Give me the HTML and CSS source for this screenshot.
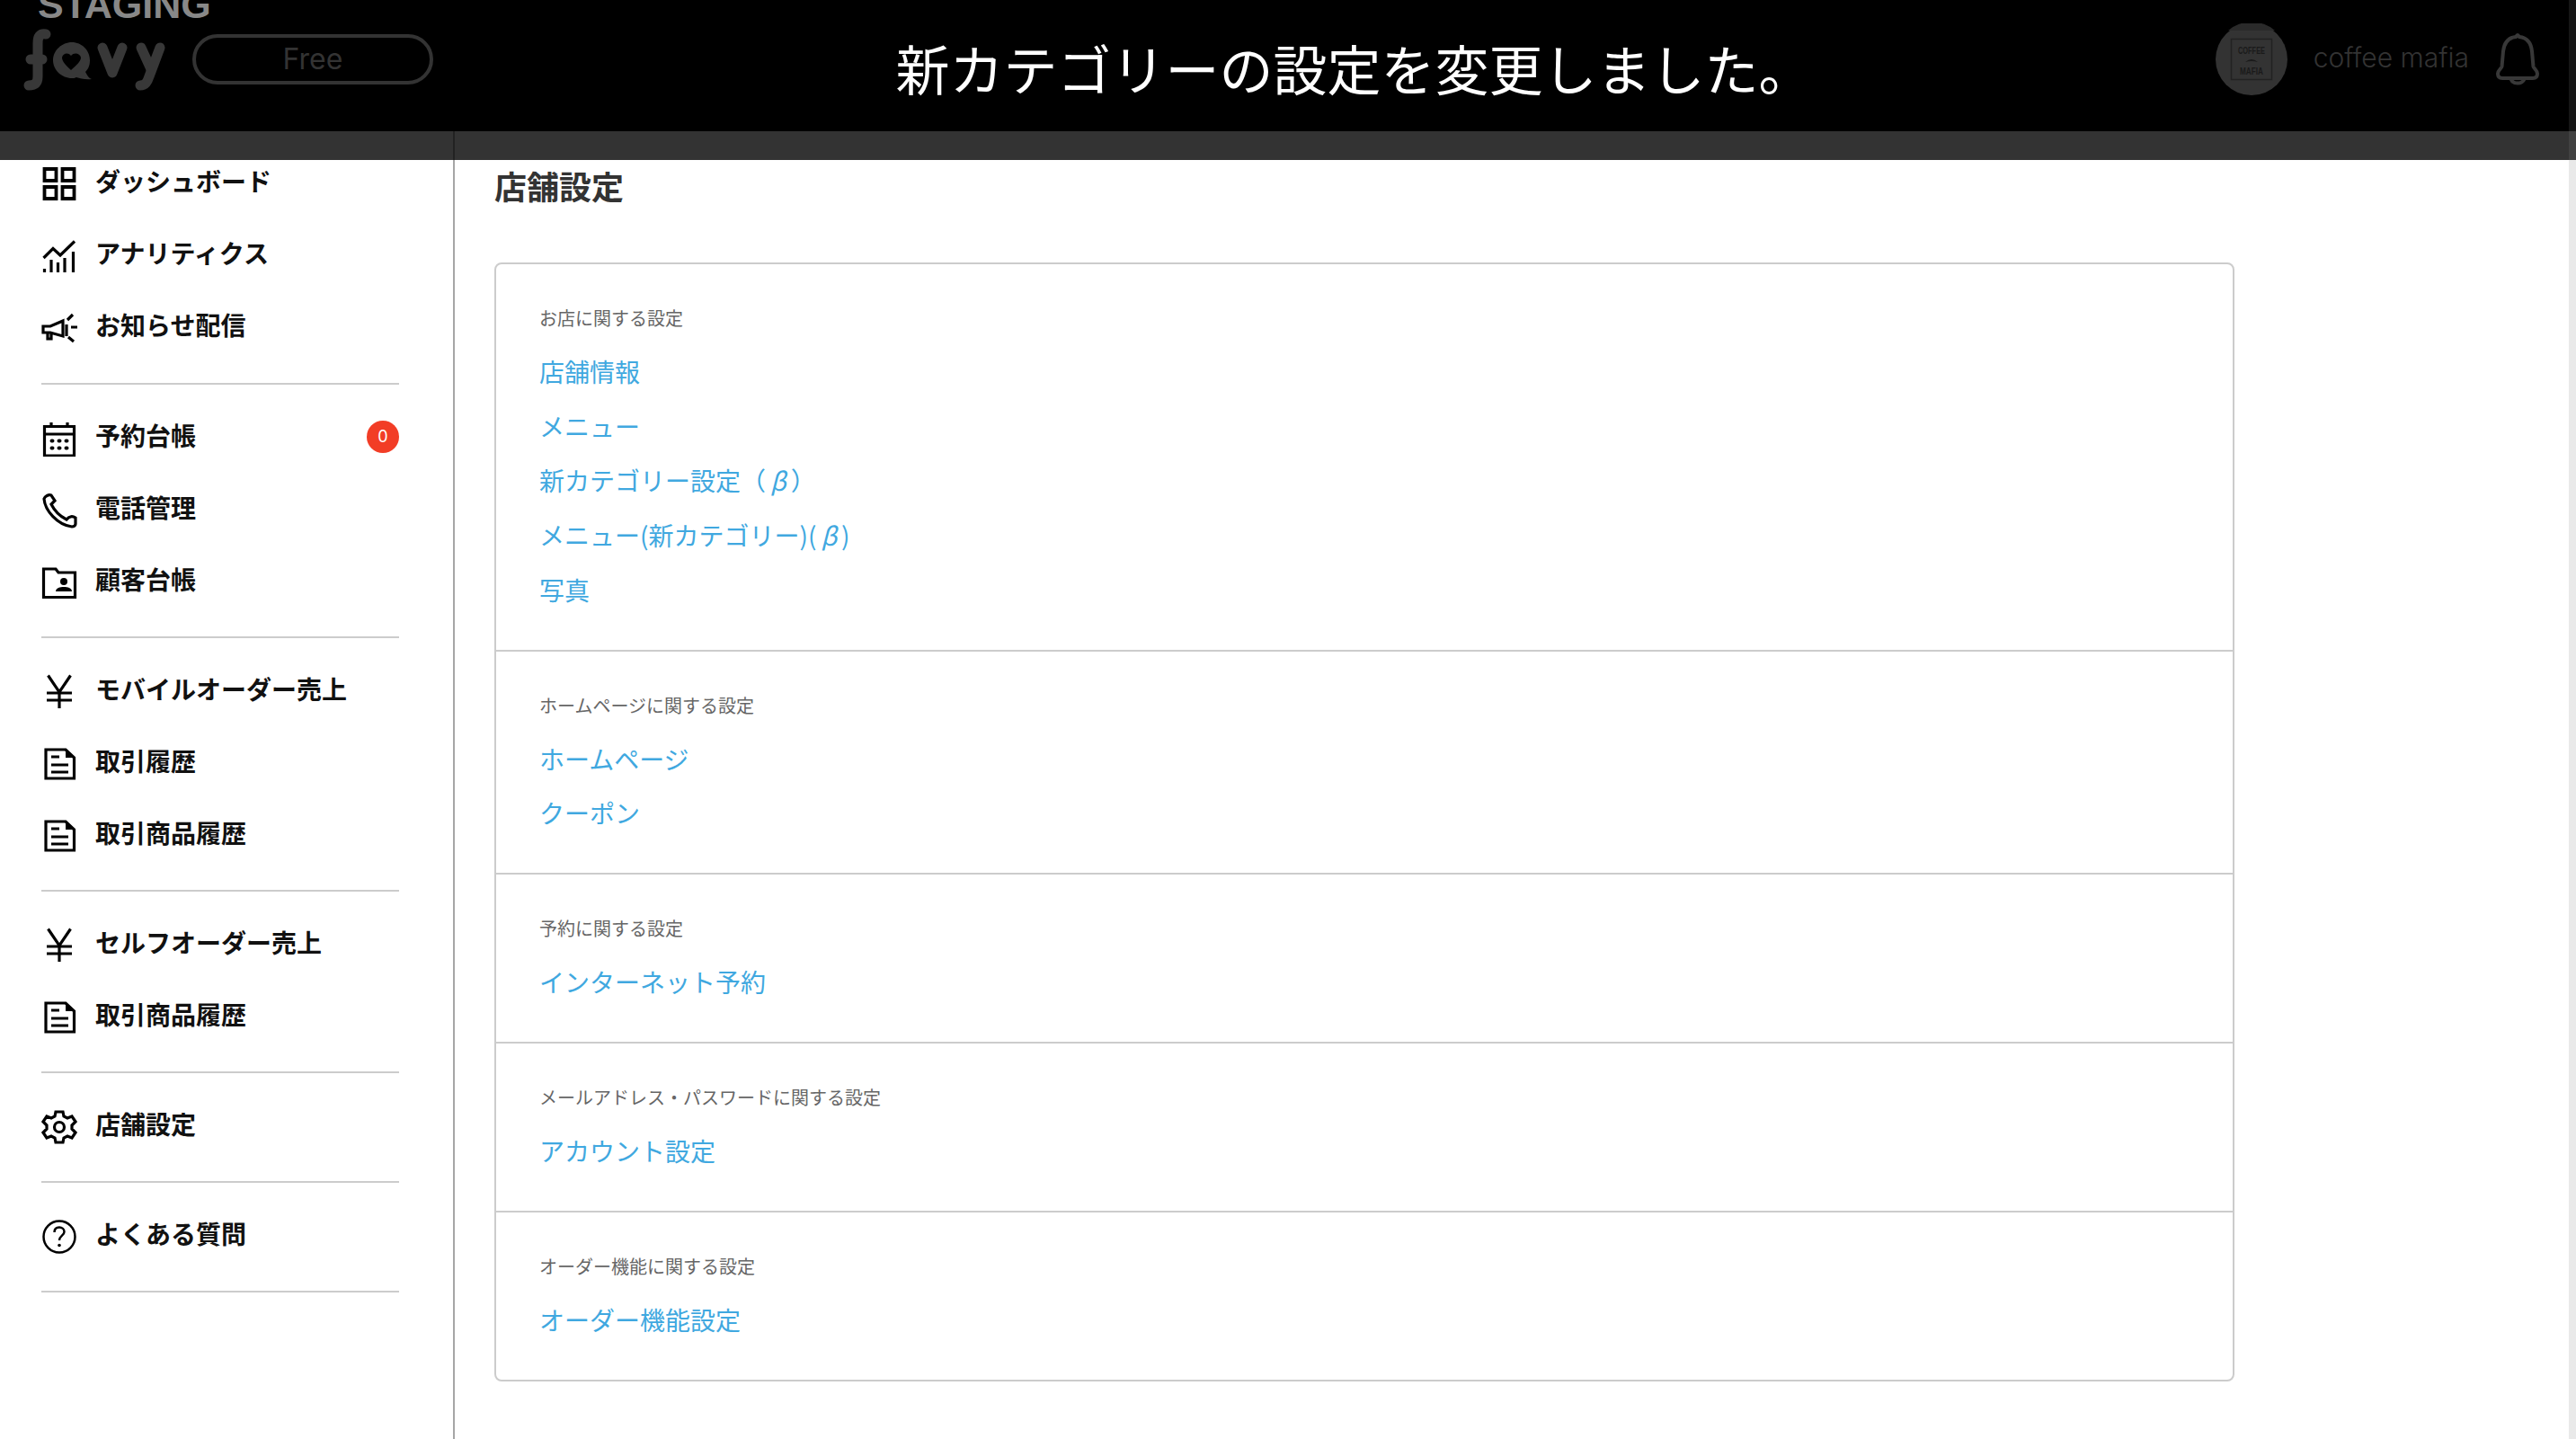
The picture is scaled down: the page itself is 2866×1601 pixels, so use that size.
FILE: index.html
```html
<!DOCTYPE html>
<html lang="ja">
<head>
<meta charset="utf-8">
<title>店舗設定</title>
<link rel="stylesheet" href="styles.css">
</head>
<body>
<div class="app">
  <div class="page">
    <header class="topbar">
      <div class="brand">
        <div class="staging">STAGING</div>
        <div class="brand-row">
          <svg class="logo" width="180" height="85" viewBox="0 0 180 85">
            <g fill="none" stroke="#383838" stroke-width="11" stroke-linecap="round" stroke-linejoin="round">
              <path d="M31 13C24 12 22 16 22 23V60C22 68 18 70 12 70"/>
              <path d="M14 41H27"/>
              <path d="M94 28L105 56L116 28"/>
              <path d="M137 28L148 52"/>
              <path d="M158 28L146 60C144 66 142 70 136 70"/>
            </g>
            <path fill="#383838" fill-rule="evenodd" d="M60 22C71 22 80 31 80 42C80 48 78 52 75 55C77 59 79 62 82 63C75 64 69 62 65 61C63 62 62 62 60 62C49 62 39 53 39 42C39 31 49 22 60 22ZM59 37C56 33 50 34 49 39C49 44 54 48 59 53C64 48 70 44 70 39C69 34 62 33 59 37Z"/>
          </svg>
          <div class="plan">Free</div>
        </div>
      </div>
      <div class="account">
        <svg class="avatar" width="80" height="80" viewBox="0 0 80 80">
          <circle cx="40" cy="40" r="40" fill="#333"/>
          <path d="M14 8A40 40 0 0 1 66 8Z" fill="#2a2a2a"/>
          <rect x="17.5" y="17.5" width="45" height="45" fill="none" stroke="#222" stroke-width="1.5"/>
          <text x="40" y="34" class="avatar-text" text-anchor="middle" textLength="30" lengthAdjust="spacingAndGlyphs">COFFEE</text>
          <path d="M33 43Q40 37 47 43Q40 41 33 43Z" fill="#1a1a1a"/>
          <text x="40" y="57" class="avatar-text" text-anchor="middle" textLength="26" lengthAdjust="spacingAndGlyphs">MAFIA</text>
        </svg>
        <div class="account-name">coffee mafia</div>
        <svg class="bell" width="50" height="60" viewBox="0 0 50 60">
          <path d="M25 3L27 5C36 6 40 12 41 21L42.500 38C42.800 40 47 42 47 46C47 49.500 45 51 42 51H8C5 51 3 49.500 3 46C3 42 7.200 40 7.500 38L9 21C10 12 14 6 23 5Z" fill="none" stroke="#383838" stroke-width="4" stroke-linejoin="round"/>
          <path d="M17.500 52A8 7 0 0 0 32.500 52" fill="none" stroke="#383838" stroke-width="4"/>
        </svg>
      </div>
    </header>
    <div class="band"><span class="band-rule"></span></div>
    <div class="layout">
      <aside class="sidebar">
        <nav class="nav-group nav-first">
          <a class="nav-item">
            <svg class="ico" viewBox="0 0 40 40"><path d="M3.500 3H16.500V16H3.500ZM23.500 3H36.500V16H23.500ZM3.500 23H16.500V36H3.500ZM23.500 23H36.500V36H23.500Z" stroke-width="3.800"/></svg>
            <span>ダッシュボード</span>
          </a>
          <a class="nav-item">
            <svg class="ico" viewBox="0 0 40 40"><path d="M2.500 22L13 11.500L21 19L37 3.500"/><path d="M3.500 38V34M11 38V24M18.500 38V27M26 38V22M35.500 38V15"/></svg>
            <span>アナリティクス</span>
          </a>
          <a class="nav-item">
            <svg class="ico" viewBox="0 0 40 40"><path d="M2 18H10L24 12V29L10 25H2ZM7 25V32H11V26"/><path d="M28 16V29M29 11L35 5M33 19H40M30 30L36 35"/></svg>
            <span>お知らせ配信</span>
          </a>
        </nav>
        <nav class="nav-group">
          <a class="nav-item">
            <svg class="ico" viewBox="0 0 40 40"><path d="M3.500 6.500H36.500V39H3.500ZM3.500 15H36.500M11 2V6.500M29 2V6.500"/><path class="dots" d="M11.500 22.500H12.500M19.500 22.500H20.500M27.500 22.500H28.500M11.500 30.500H12.500M19.500 30.500H20.500M27.500 30.500H28.500"/></svg>
            <span>予約台帳</span>
            <b class="badge">0</b>
          </a>
          <a class="nav-item">
            <svg class="ico" viewBox="0 0 40 40"><path d="M3 7C4 20 18 36 34 38C36 38 38 37 38 35V28C35 26 31 26 28 30C20 26 15 21 11 13L15 9L11 3C8 2 4 4 3 7Z"/></svg>
            <span>電話管理</span>
          </a>
          <a class="nav-item">
            <svg class="ico" viewBox="0 0 40 40"><path d="M2.500 5H16L19 9H37.500V36.500H2.500Z"/><circle class="fill" cx="25" cy="19" r="4"/><path class="fill" d="M16 30C16 26 21 25 25 25C29 25 34 26 34 30Z"/></svg>
            <span>顧客台帳</span>
          </a>
        </nav>
        <nav class="nav-group">
          <a class="nav-item">
            <svg class="ico" viewBox="0 0 40 40"><path d="M7.500 1.500L20 20L32.500 1.500M20 20V38M6 21H34M6 29H34"/></svg>
            <span>モバイルオーダー売上</span>
          </a>
          <a class="nav-item">
            <svg class="ico" viewBox="0 0 40 40"><path d="M5 4H27L36.500 13V36H5ZM11 12H20M11 21H30M11 29H30"/><path class="fill" d="M27 4L36.500 13H27Z"/></svg>
            <span>取引履歴</span>
          </a>
          <a class="nav-item">
            <svg class="ico" viewBox="0 0 40 40"><path d="M5 4H27L36.500 13V36H5ZM11 12H20M11 21H30M11 29H30"/><path class="fill" d="M27 4L36.500 13H27Z"/></svg>
            <span>取引商品履歴</span>
          </a>
        </nav>
        <nav class="nav-group">
          <a class="nav-item">
            <svg class="ico" viewBox="0 0 40 40"><path d="M7.500 1.500L20 20L32.500 1.500M20 20V38M6 21H34M6 29H34"/></svg>
            <span>セルフオーダー売上</span>
          </a>
          <a class="nav-item">
            <svg class="ico" viewBox="0 0 40 40"><path d="M5 4H27L36.500 13V36H5ZM11 12H20M11 21H30M11 29H30"/><path class="fill" d="M27 4L36.500 13H27Z"/></svg>
            <span>取引商品履歴</span>
          </a>
        </nav>
        <nav class="nav-group">
          <a class="nav-item">
            <svg class="ico" viewBox="0 0 40 40"><path d="M16 3H24L25 8L29 10L34 8L38 14L34 18V22L38 26L34 32L29 30L25 32L24 37H16L15 32L11 30L6 32L2 26L6 22V18L2 14L6 8L11 10L15 8Z"/><circle cx="20" cy="20" r="5.500"/></svg>
            <span>店舗設定</span>
          </a>
        </nav>
        <nav class="nav-group">
          <a class="nav-item">
            <svg class="ico" viewBox="0 0 40 40"><circle cx="20" cy="20" r="17.500" stroke-width="2.500"/><path stroke-width="2.500" d="M14.500 15C14.500 11 17 9.500 20 9.500C23 9.500 25.500 11.500 25.500 14.500C25.500 18.500 20 19 20 24"/><circle class="fill" cx="20" cy="29.500" r="1.800"/></svg>
            <span>よくある質問</span>
          </a>
        </nav>
      </aside>
      <main class="content">
        <h1 class="page-title">店舗設定</h1>
        <div class="card">
          <section class="card-section">
            <p class="section-label">お店に関する設定</p>
            <a class="link">店舗情報</a>
            <a class="link">メニュー</a>
            <a class="link">新カテゴリー設定（<i class="beta">β</i>）</a>
            <a class="link">メニュー(新カテゴリー)(<i class="beta">β</i>)</a>
            <a class="link">写真</a>
          </section>
          <section class="card-section">
            <p class="section-label">ホームページに関する設定</p>
            <a class="link">ホームページ</a>
            <a class="link">クーポン</a>
          </section>
          <section class="card-section">
            <p class="section-label">予約に関する設定</p>
            <a class="link">インターネット予約</a>
          </section>
          <section class="card-section">
            <p class="section-label">メールアドレス・パスワードに関する設定</p>
            <a class="link">アカウント設定</a>
          </section>
          <section class="card-section">
            <p class="section-label">オーダー機能に関する設定</p>
            <a class="link">オーダー機能設定</a>
          </section>
        </div>
      </main>
    </div>
  </div>
  <div class="scroll-rail">
    <span class="rail-top"></span>
    <span class="rail-band"></span>
    <span class="rail-rest"></span>
  </div>
  <div class="flash">新カテゴリーの設定を変更しました。</div>
</div>
</body>
</html>
```
FILE: styles.css
```css
* { box-sizing: border-box; }
html, body { margin: 0; padding: 0; height: 100%; overflow: hidden; background: #fff; }
body { font-family: "Noto Sans CJK JP", "Noto Sans", sans-serif; color: #333; }
.app { position: relative; display: flex; width: 2866px; height: 1601px; overflow: hidden; }
.page { flex: 1; min-width: 0; display: flex; flex-direction: column; }

.topbar { height: 146px; background: #000; display: flex; justify-content: space-between; overflow: hidden; }
.brand { padding-left: 20px; width: 600px; }
.staging { margin: -18px 0 0 22px; font: 700 43px/46px "Liberation Sans", sans-serif; color: #888; height: 43px; }
.brand-row { display: flex; align-items: flex-start; }
.logo { display: block; flex: none; }
.plan { width: 268px; height: 56px; margin: 13px 0 0 14px; border: 4px solid #333; border-radius: 28px; color: #333; font: 400 32px/47px Inter, sans-serif; text-align: center; }
.account { display: flex; align-items: flex-start; padding: 26px 32px 0 0; }
.avatar { display: block; }
.avatar-text { font: 700 11px "Liberation Sans", sans-serif; fill: #1a1a1a; }
.account-name { margin: 16px 0 0 29px; font: 300 30px/44px Inter, sans-serif; color: #333; }
.bell { display: block; margin: 10px 0 0 29px; }

.band { height: 32px; background: #333; flex: none; padding-left: 504px; }
.band-rule { display: block; width: 2px; height: 32px; background: #222; }

.layout { flex: 1; display: flex; min-height: 0; }
.sidebar { width: 506px; flex: none; border-right: 2px solid #a6a6a6; padding: 0 60px 0 46px; }
.nav-group { border-bottom: 2px solid #ccc; padding: 18px 0 22px; }
.nav-first { padding: 0 0 23px; margin-top: -15px; }
.nav-item { display: flex; align-items: center; height: 80px; font-size: 28px; font-weight: 700; line-height: 40px; color: #111; }
.nav-item > span { margin: 0 0 4px 20px; }
.ico { display: block; width: 40px; height: 40px; margin-top: 4px; flex: none; fill: none; stroke: #000; stroke-width: 3.200; }
.ico .fill { fill: #000; stroke: none; }
.ico .dots { stroke-width: 4; stroke-linecap: round; }
.badge { margin: 0 0 0 auto; width: 36px; height: 36px; border-radius: 50%; background: #f23d26; color: #fff; font: 400 18px/36px Inter, sans-serif; text-align: center; }

.content { flex: 1; padding: 0 0 0 44px; min-width: 0; }
.page-title { margin: 0; height: 114px; font-size: 36px; line-height: 57px; font-weight: 700; color: #333; }
.card { width: 1936px; border: 2px solid #ccc; border-radius: 8px; }
.card-section { padding: 46px 0 36.330px 48px; border-bottom: 2px solid #ccc; }
.card-section:last-child { border-bottom: 0; }
.section-label { margin: 0 0 15px; font-size: 20px; line-height: 28px; color: #666; }
.link { display: block; font-size: 28px; line-height: 60.670px; color: #40a8e0; }
.beta { font-style: italic; margin: 0 5px; }

.scroll-rail { width: 8px; flex: none; display: flex; flex-direction: column; }
.rail-top { height: 146px; background: #161616; }
.rail-band { height: 32px; background: #414141; }
.rail-rest { flex: 1; background: #e9e9e9; }

.flash { position: absolute; left: 0; top: 33px; width: 100%; padding-left: 147px; text-align: center; font-size: 60px; line-height: 84px; color: #fff; }
```
